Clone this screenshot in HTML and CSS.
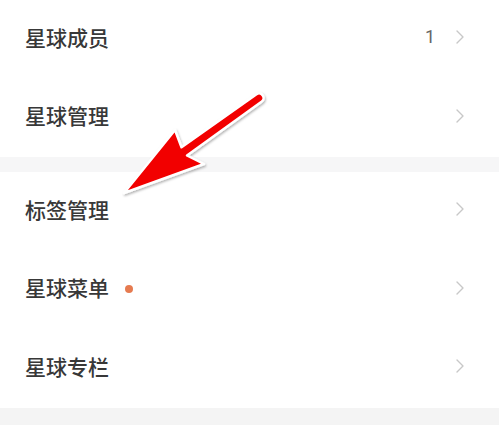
FILE: index.html
```html
<!DOCTYPE html>
<html lang="zh">
<head>
<meta charset="utf-8">
<link rel="stylesheet" href="styles.css">
</head>
<body>
<div class="page">
  <div class="section">
    <div class="row">
      <span class="label">星球成员</span>
      <span class="right"><span class="count">1</span><svg class="chev" viewBox="0 0 8 14"><path d="M1 1 L7 7 L1 13"/></svg></span>
    </div>
    <div class="row">
      <span class="label">星球管理</span>
      <span class="right"><svg class="chev" viewBox="0 0 8 14"><path d="M1 1 L7 7 L1 13"/></svg></span>
    </div>
  </div>
  <div class="gap"></div>
  <div class="section">
    <div class="row">
      <span class="label">标签管理</span>
      <span class="right"><svg class="chev" viewBox="0 0 8 14"><path d="M1 1 L7 7 L1 13"/></svg></span>
    </div>
    <div class="row">
      <span class="label">星球菜单<span class="dot"></span></span>
      <span class="right"><svg class="chev" viewBox="0 0 8 14"><path d="M1 1 L7 7 L1 13"/></svg></span>
    </div>
    <div class="row">
      <span class="label">星球专栏</span>
      <span class="right"><svg class="chev" viewBox="0 0 8 14"><path d="M1 1 L7 7 L1 13"/></svg></span>
    </div>
  </div>
  <div class="bottom"></div>
  <svg class="arrow" width="499" height="425" viewBox="0 0 499 425">
    <defs>
      <filter id="sh" x="-20%" y="-20%" width="140%" height="140%">
        <feDropShadow dx="1" dy="1.5" stdDeviation="1.2" flood-color="#000" flood-opacity="0.3"/>
      </filter>
    </defs>
    <path filter="url(#sh)" d="M124 193 L175 130 L181.5 147.25 L256.5 94.25 A4.5 4.5 0 0 1 261.5 101.75 L187 155.5 L204 164 Z" fill="#f20000" stroke="#ffffff" stroke-width="2.5" stroke-linejoin="round"/>
  </svg>
</div>
</body>
</html>
```

FILE: styles.css
```css
html, body {
  margin: 0;
  padding: 0;
  background: #ffffff;
}
.page {
  position: relative;
  width: 499px;
  height: 425px;
  overflow: hidden;
  font-family: "Noto Sans CJK SC", "Noto Sans", sans-serif;
}
.section {
  display: flex;
  flex-direction: column;
  background: #ffffff;
}
.row {
  height: 78.5px;
  display: flex;
  align-items: center;
  justify-content: space-between;
  padding: 0 35px 0 25px;
}
.label {
  display: flex;
  align-items: center;
  font-size: 21px;
  font-weight: 500;
  color: #383838;
  line-height: 1;
  padding-bottom: 4px;
}
.dot {
  width: 8px;
  height: 8px;
  border-radius: 50%;
  background: #e67b50;
  margin-left: 16px;
  margin-top: 3px;
}
.right {
  display: flex;
  align-items: center;
  padding-bottom: 4px;
}
.count {
  font-family: "Roboto", "Noto Sans", sans-serif;
  font-size: 18px;
  color: #666666;
  margin-right: 21px;
  line-height: 1;
}
.chev {
  width: 8px;
  height: 14px;
  fill: none;
  stroke: #c8c8c8;
  stroke-width: 1.4;
  stroke-linecap: round;
  stroke-linejoin: round;
}
.gap {
  height: 15px;
  background: #f6f6f7;
}
.bottom {
  height: 20px;
  background: #f4f4f4;
}
.arrow {
  position: absolute;
  left: 0;
  top: 0;
  pointer-events: none;
}
```
